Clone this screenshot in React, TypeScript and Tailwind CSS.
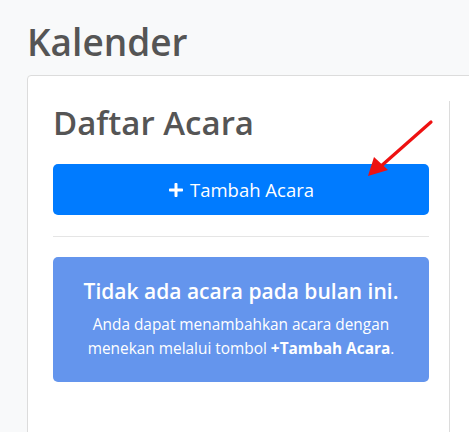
import { FaPlus } from 'react-icons/fa'

export default function App() {
  return (
    <div className="min-h-[432px] w-[469px] overflow-hidden bg-[#f8f9fa] font-['Open_Sans','Noto_Sans',sans-serif] text-[#555]">
      {/* Page title */}
      <h1 className="pl-[27px] pt-[19px] text-[37px] font-semibold leading-[46px] text-[#555]">Kalender</h1>

      {/* Card */}
      <div className="ml-[27px] mt-[10px] w-[480px] rounded-tl-[4px] border border-[#dcdcdc] bg-white pt-[25px]">
        <div className="relative w-[422px] border-r border-[#dcdcdc] pb-[60px] pl-[25px] pr-[20px]">
          <h2 className="pt-[2px] text-[33px] font-semibold leading-[40px] text-[#555]">Daftar Acara</h2>

          <button className="mt-[21px] flex h-[51px] w-full items-center justify-center gap-[6px] rounded-[5px] bg-[#007bff] text-[18.5px] text-white">
            <FaPlus className="h-[16px] w-[16px]" />
            Tambah Acara
          </button>

          <div className="mt-[21px] h-px bg-[#e5e5e5]" />

          <div className="mt-[20px] flex h-[125px] flex-col items-center justify-center rounded-[5px] bg-[#6495ed] px-4 text-center text-white">
            <p className="mt-[-2px] text-[21px] font-semibold leading-[28px]">Tidak ada acara pada bulan ini.</p>
            <p className="mt-[8px] text-[15.4px] leading-[24px]">
              Anda dapat menambahkan acara dengan
              <br />
              menekan melalui tombol <b>+Tambah Acara</b>.
            </p>
          </div>

          {/* annotation arrow */}
          <svg className="absolute left-[338px] top-[18px]" width="72" height="78" viewBox="0 0 72 78">
            <line x1="65" y1="3" x2="14" y2="48" stroke="#ee1111" strokeWidth="3.2" strokeLinecap="round" />
            <polygon points="2,57 8,38 22,51" fill="#ee1111" />
          </svg>
        </div>
      </div>
    </div>
  )
}
